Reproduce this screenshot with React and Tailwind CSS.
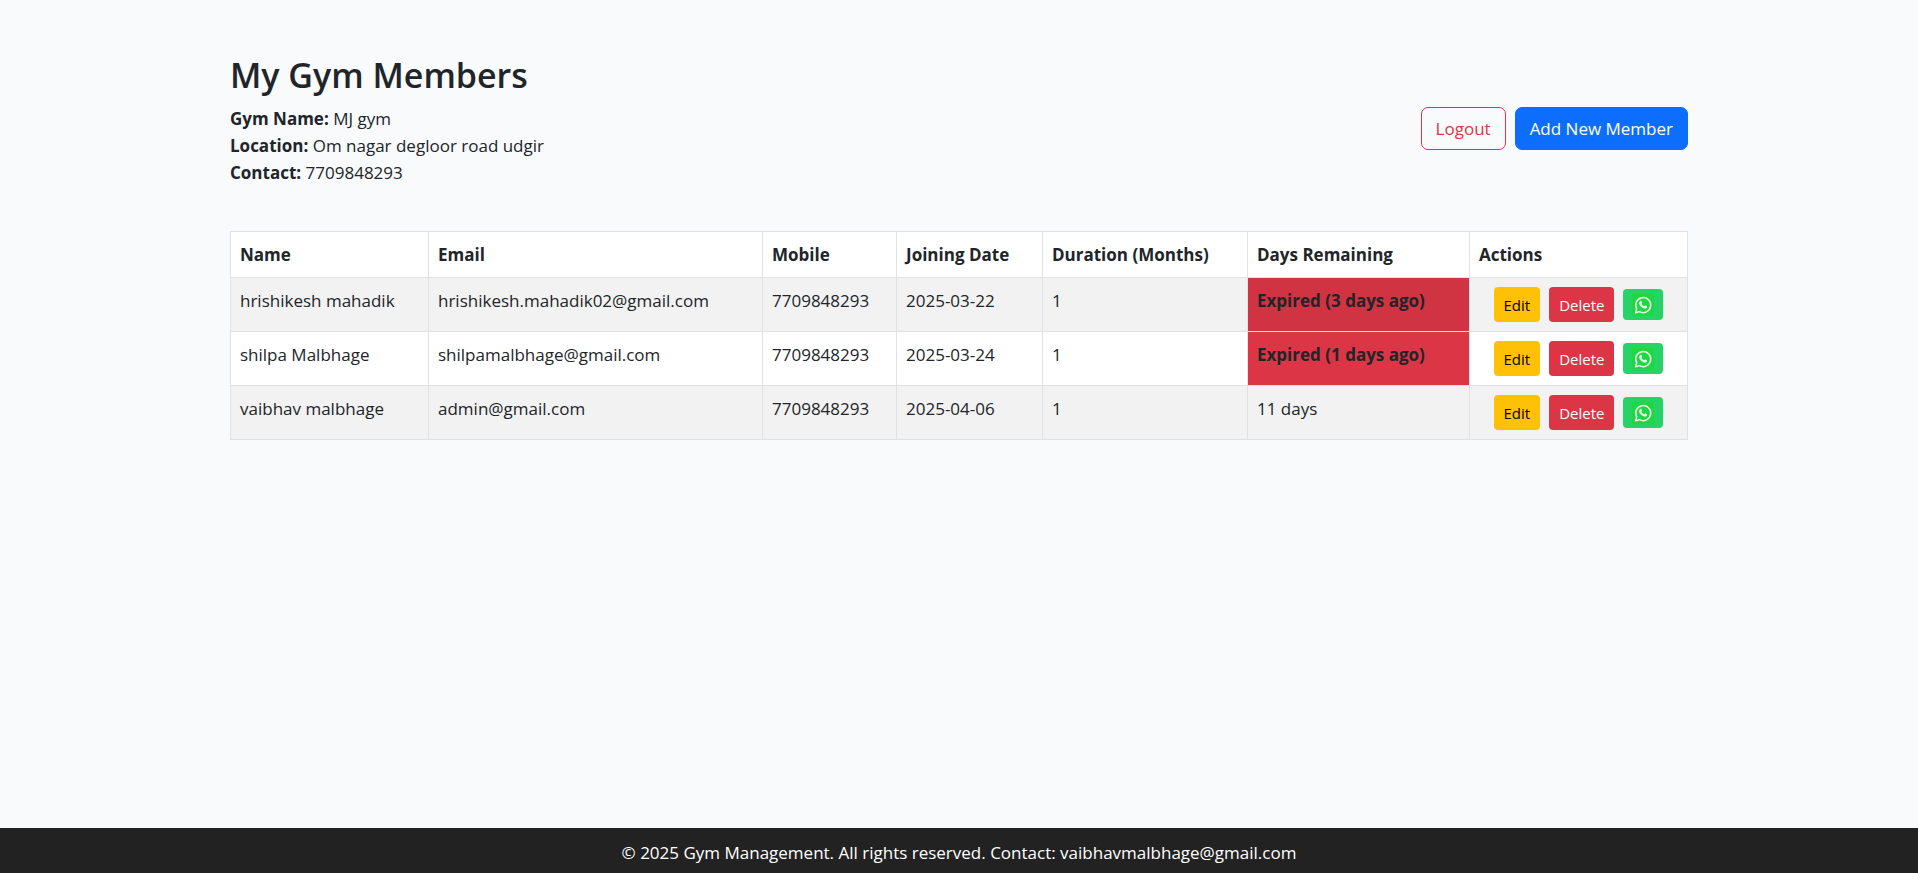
const members = [
  { name: "hrishikesh mahadik", email: "hrishikesh.mahadik02@gmail.com", mobile: "7709848293", joined: "2025-03-22", months: 1, remaining: -3 },
  { name: "shilpa Malbhage", email: "shilpamalbhage@gmail.com", mobile: "7709848293", joined: "2025-03-24", months: 1, remaining: -1 },
  { name: "vaibhav malbhage", email: "admin@gmail.com", mobile: "7709848293", joined: "2025-04-06", months: 1, remaining: 11 },
];

const columns = [
  { label: "Name", width: "w-[198px]" },
  { label: "Email", width: "w-[334px]" },
  { label: "Mobile", width: "w-[134px]" },
  { label: "Joining Date", width: "w-[146px]" },
  { label: "Duration (Months)", width: "w-[205px]" },
  { label: "Days Remaining", width: "w-[222px]" },
  { label: "Actions", width: "w-[218px]" },
];

const cell = "border border-[#dee2e6] p-[9px] align-top";

function WhatsAppIcon() {
  return (
    <svg viewBox="0 0 22 22" className="size-[22px]" aria-hidden="true">
      <rect width="22" height="22" fill="#1fd741" />
      <path
        d="M3.6 18.7 4.7 14.8A7.5 7.5 0 1 1 7.5 17.6Z"
        fill="none"
        stroke="#e9fbec"
        strokeWidth="1.5"
        strokeLinejoin="round"
      />
      <path
        d="M8.200 6.900c.3-.3.9-.3 1.100.1l.7 1.600c.1.3 0 .5-.6 1.200.6 1.200 1.500 2 2.700 2.500.7-.8.9-1 1.200-.8l1.600.8c.3.2.3.5.2.9-.4 1.200-1.700 1.600-2.800 1.300-2.600-.7-4.400-2.500-5.100-4.500-.3-1.200.2-2.300 1-3.100Z"
        fill="#e9fbec"
      />
    </svg>
  );
}

function MemberRow({ member }) {
  const expired = member.remaining < 0;
  return (
    <tr className="group bg-white odd:bg-[#f2f2f2]">
      <td className={cell}>{member.name}</td>
      <td className={cell}>{member.email}</td>
      <td className={cell}>{member.mobile}</td>
      <td className={cell}>{member.joined}</td>
      <td className={cell}>{member.months}</td>
      {expired ? (
        <td className={`${cell} bg-[#dc3545] font-bold group-odd:bg-[#d03341]`}>
          Expired ({-member.remaining} days ago)
        </td>
      ) : (
        <td className={cell}>{member.remaining} days</td>
      )}
      <td className={cell}>
        <div className="flex items-center justify-center gap-[9px] text-[15px] leading-[23px]">
          <button type="button" className="rounded-[4px] bg-[#ffc107] px-[10px] pt-[7px] pb-[5px] text-black">Edit</button>
          <button type="button" className="rounded-[4px] bg-[#dc3545] px-[10px] pt-[7px] pb-[5px] text-white">Delete</button>
          <a
            href="#whatsapp"
            aria-label={`Message ${member.name} on WhatsApp`}
            className="flex h-[31px] w-[40px] items-center justify-center rounded-[4px] bg-[#25d366]"
          >
            <WhatsAppIcon />
          </a>
        </div>
      </td>
    </tr>
  );
}

export default function App() {
  return (
    <div className="flex min-h-screen flex-col bg-[#f8fafc] font-['Open_Sans',sans-serif] text-[17px] leading-[27px] text-[#212529]">
      <main className="mx-auto w-full max-w-[1458px] flex-1 pt-[54px]">
        <header className="mb-[28px] flex items-center justify-between">
          <div className="mb-[17px]">
            <h1 className="mb-[9px] text-[34px] leading-[42px] font-semibold">My Gym Members</h1>
            <p><strong>Gym Name:</strong> MJ gym</p>
            <p><strong>Location:</strong> Om nagar degloor road udgir</p>
            <p><strong>Contact:</strong> 7709848293</p>
          </div>
          <div className="flex gap-[9px]">
            <button type="button" className="rounded-[7px] border border-[#dc3545] px-[14px] py-[7px] text-[#dc3545]">Logout</button>
            <button type="button" className="rounded-[7px] border border-[#0d6efd] bg-[#0d6efd] px-[14px] py-[7px] text-white">Add New Member</button>
          </div>
        </header>
        <table className="w-full table-fixed border-collapse">
          <thead>
            <tr className="bg-white">
              {columns.map((column) => (
                <th key={column.label} scope="col" className={`${cell} ${column.width} text-left font-bold`}>
                  {column.label}
                </th>
              ))}
            </tr>
          </thead>
          <tbody>
            {members.map((member) => (
              <MemberRow key={member.email} member={member} />
            ))}
          </tbody>
        </table>
      </main>
      <footer className="bg-[#222222] pt-[11px] pb-[7px] text-center text-white">
        © 2025 Gym Management. All rights reserved. Contact: vaibhavmalbhage@gmail.com
      </footer>
    </div>
  );
}
